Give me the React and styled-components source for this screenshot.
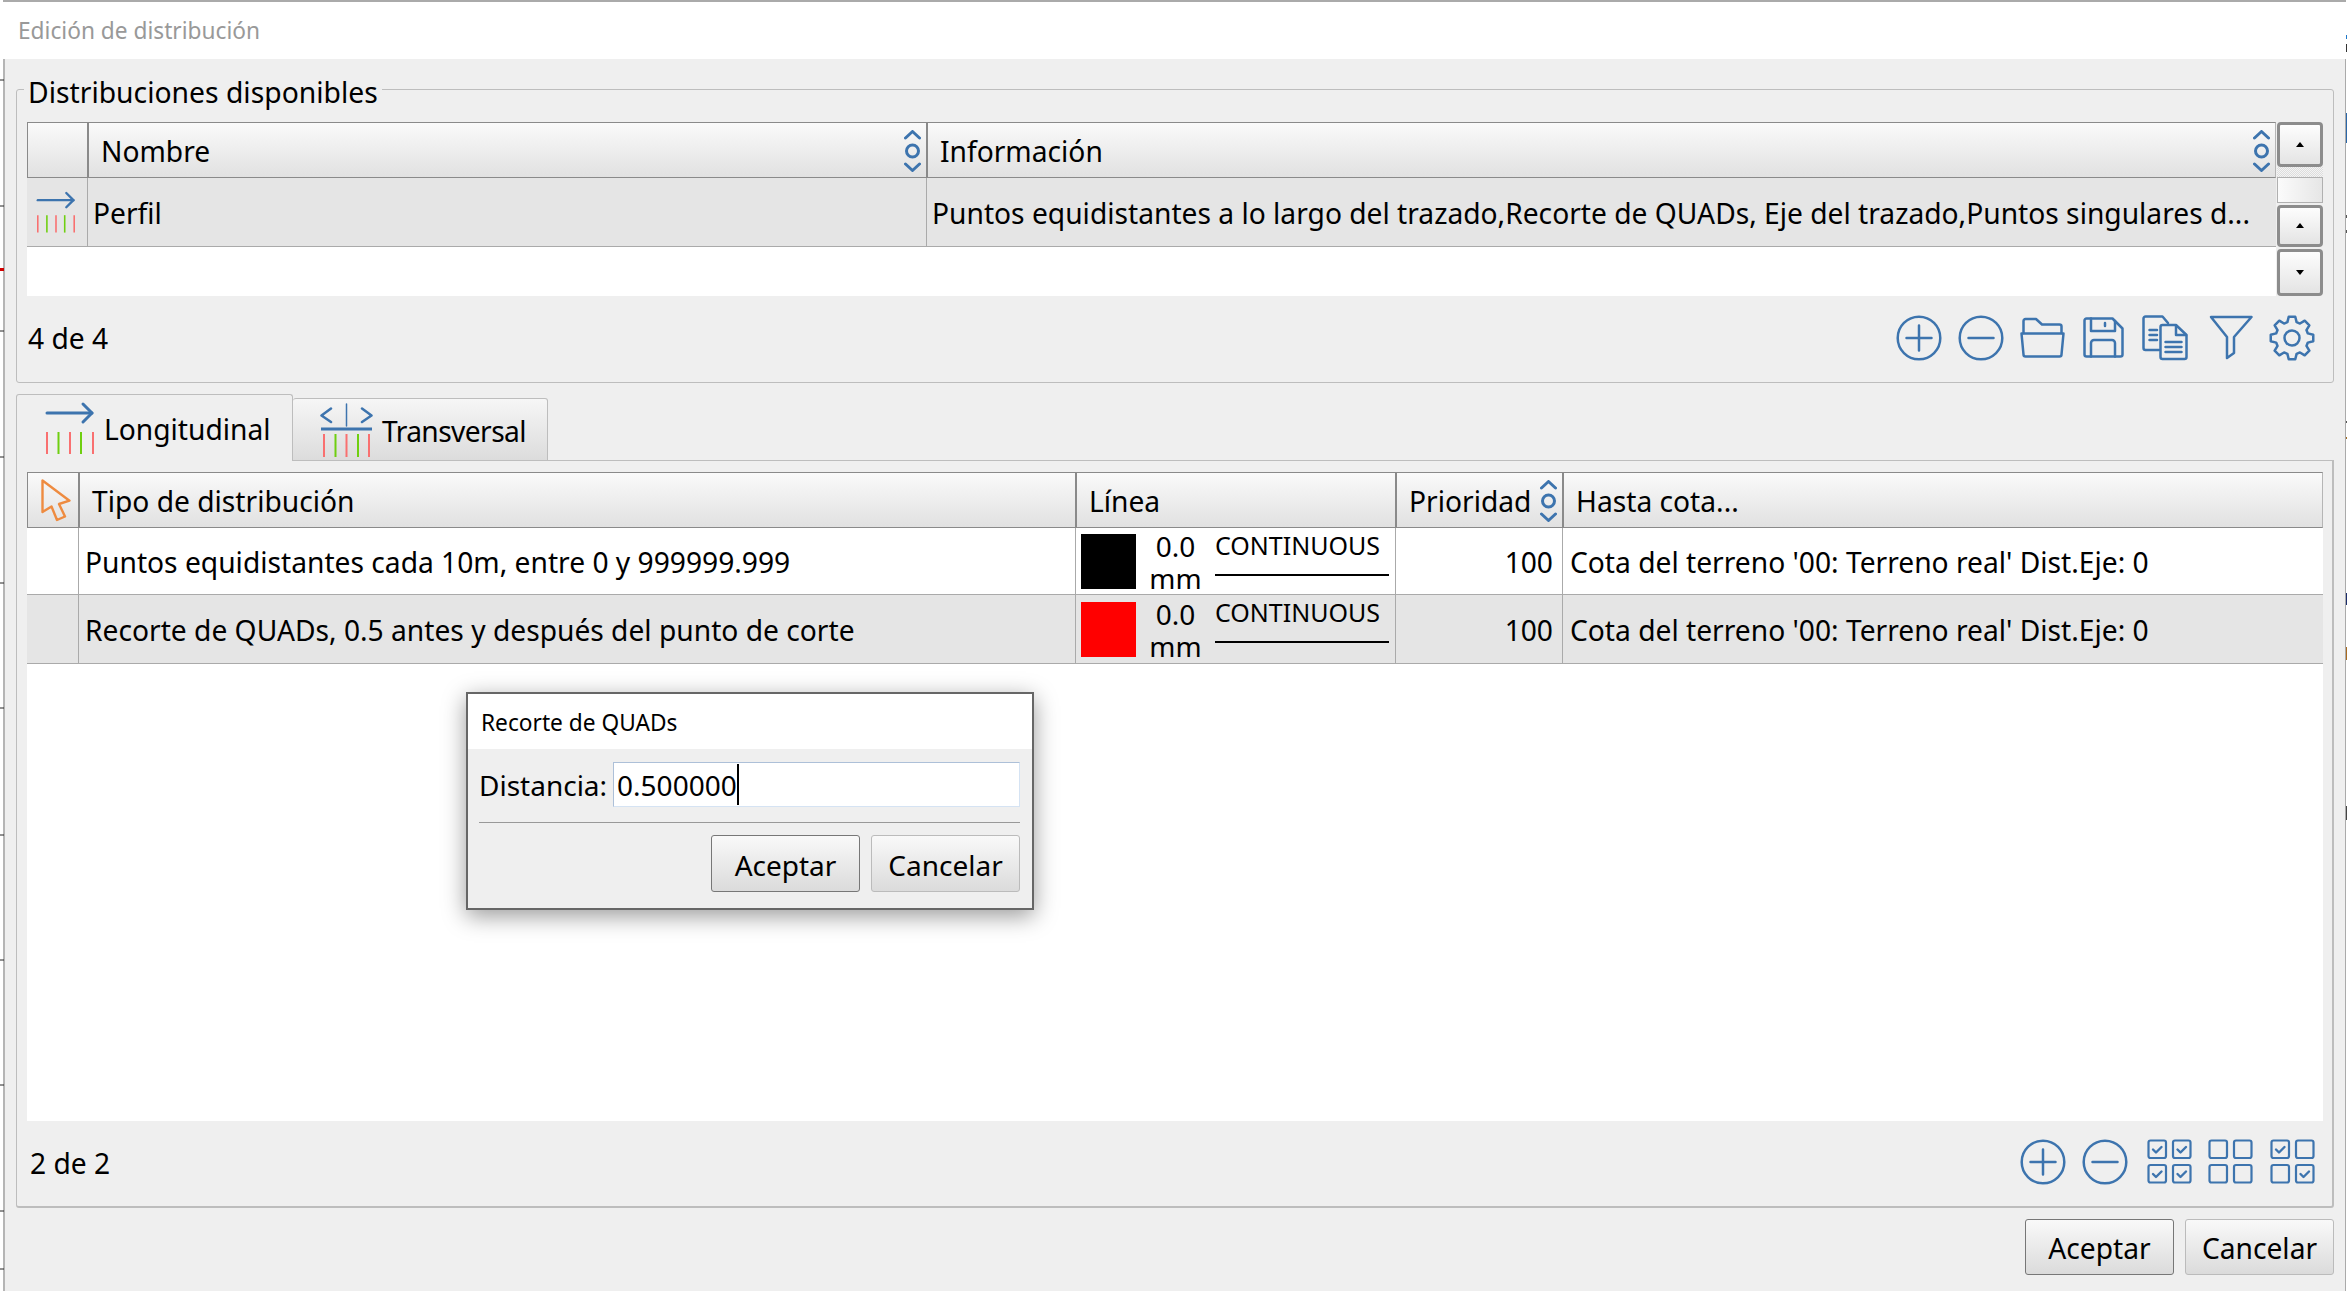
import React from "react";
import styled, { createGlobalStyle } from "styled-components";

const BLUE = "#3d74ae";
const FONT = '"Noto Sans", "Open Sans", sans-serif';

const GlobalStyle = createGlobalStyle`
  html, body {
    margin: 0;
    background: #fff;
    overflow: hidden;
  }
  * { box-sizing: border-box; }
`;

const Page = styled.div`
  position: relative;
  display: flex;
  width: 2347px;
  height: 1291px;
  padding-left: 3px;
  font-family: ${FONT};
  font-size: 28.2px;
  color: #000;
`;
const BehindMarks = styled.svg`
  position: absolute;
  left: 0;
  top: 0;
  pointer-events: none;
`;
const Window = styled.div`
  display: flex;
  flex-direction: column;
  width: 2343px;
  height: 1291px;
  border-top: 2px solid #aaa;
`;
const TitleBar = styled.div`
  height: 57px;
  flex-shrink: 0;
  display: flex;
  align-items: center;
  padding: 0 0 1px 15px;
  background: #fff;
  color: #999;
  font-size: 22.7px;
`;
const Body = styled.div`
  flex: 1;
  display: flex;
  flex-direction: column;
  padding: 0 11px;
  background: #efefef;
  border-left: 2px solid #b5b5b5;
  border-right: 1px solid #aaa;
`;

const Group = styled.fieldset`
  margin: 10px 0 0;
  padding: 0 10px 0 10px;
  min-width: 0;
  border: 1px solid #bdbdbd;
  border-radius: 3px;
`;
const Legend = styled.legend`
  margin-left: -3px;
  padding: 6px 4px 0;
  line-height: 34px;
  font-size: 28.3px;
`;
const TableArea = styled.div`
  display: flex;
  gap: 1px;
  margin-top: 13px;
  height: 174px;
`;
const TableBox = styled.div`
  flex: 1;
  min-width: 0;
  background: #fff;
  height: ${(p) => p.$height || "auto"};
`;
const HeaderRow = styled.div`
  display: grid;
  grid-template-columns: ${(p) => p.$cols};
  height: 56px;
`;
const HeadCell = styled.div`
  display: flex;
  align-items: center;
  justify-content: ${(p) => (p.$center ? "center" : "space-between")};
  padding: 2px 5px 0 ${(p) => p.$pad || 0}px;
  background: linear-gradient(#fafafa, #e1e1e1);
  border: solid #8a8a8a;
  border-width: 1px 0 1px 2px;
  &:first-child { border-left-width: 1px; padding: 0 0 0 ${(p) => p.$pad || 0}px; }
  &:last-child { border-right: 1px solid #b5b5b5; }
`;
const Row = styled.div`
  display: grid;
  grid-template-columns: ${(p) => p.$cols};
  height: ${(p) => p.$h}px;
  background: ${(p) => (p.$alt ? "#e5e5e5" : "#fff")};
  border-bottom: 1px solid #aaa;
`;
const Cell = styled.div`
  display: flex;
  align-items: center;
  justify-content: ${(p) => (p.$right ? "flex-end" : "flex-start")};
  padding: ${(p) => (p.$right ? "1px 9px 0 0" : `1px 0 0 ${p.$pad || 0}px`)};
  border-left: 1px solid #aaa;
  white-space: nowrap;
  &:first-child { border-left: 0; justify-content: center; padding: 0 2px 0 0; }
`;

const ScrollBar = styled.div`
  width: 46px;
  display: flex;
  flex-direction: column;
`;
const ScrollButton = styled.div`
  height: ${(p) => p.$h}px;
  margin-top: ${(p) => p.$mt || 0}px;
  display: flex;
  align-items: center;
  justify-content: center;
  background: linear-gradient(#fdfdfd, #e4e4e4);
  border: 3px solid #8c8c8c;
  border-radius: 4px;
`;
const ScrollTrack = styled.div`
  height: 10px;
  background: repeating-conic-gradient(#ddd 0 25%, #f4f4f4 0 50%) 0 0 / 2px 2px;
`;
const ScrollThumb = styled.div`
  height: 26px;
  background: linear-gradient(90deg, #fbfbfb, #e6e6e6);
  border: 1px solid #b0b0b0;
`;
const Triangle = styled.div`
  width: 0;
  height: 0;
  border-left: 4px solid transparent;
  border-right: 4px solid transparent;
  ${(p) => (p.$down ? "border-top: 5px solid #000;" : "border-bottom: 5px solid #000;")}
`;

const FooterBar = styled.div`
  height: ${(p) => p.$h}px;
  display: flex;
  align-items: center;
  justify-content: space-between;
  padding-bottom: ${(p) => p.$pb}px;
`;
const Count = styled.span`
  padding: ${(p) => p.$top || 0}px 0 0 ${(p) => p.$pad}px;
`;
const Tools = styled.div`
  display: flex;
  align-items: center;
`;
const ToolSlot = styled.div`
  width: 61.5px;
  height: 46px;
  margin-left: ${(p) => p.$ml || 0}px;
  display: flex;
  align-items: center;
  justify-content: center;
`;

const TabStrip = styled.div`
  display: flex;
  align-items: flex-end;
  margin-top: 12px;
  height: 66px;
  margin-bottom: -1px;
`;
const Tab = styled.div`
  position: relative;
  display: flex;
  align-items: center;
  height: ${(p) => (p.$active ? 67 : 63)}px;
  width: ${(p) => p.$w}px;
  gap: ${(p) => (p.$active ? 10 : 9)}px;
  padding-left: ${(p) => p.$pad}px;
  background: ${(p) => (p.$active ? "#efefef" : "linear-gradient(#f6f6f6, #dcdcdc)")};
  border: 1px solid #bdbdbd;
  border-bottom: ${(p) => (p.$active ? "0" : "1px solid #bdbdbd")};
  border-left-width: ${(p) => (p.$active ? 1 : 0)}px;
  border-radius: 3px 3px 0 0;
  z-index: ${(p) => (p.$active ? 1 : 0)};
`;
const TabLabel = styled.span`
  padding-top: 2px;
  letter-spacing: ${(p) => p.$spacing || 0}px;
`;
const TabPane = styled.div`
  height: 748px;
  padding: 11px 9px 0 10px;
  border: 1px solid #bdbdbd;
  border-bottom-width: 2px;
  border-right-width: 2px;
  border-radius: 0 0 3px 3px;
`;

const Swatch = styled.div`
  width: 55px;
  height: 55px;
  flex-shrink: 0;
  margin-left: 5px;
  background: ${(p) => p.$color};
`;
const Thickness = styled.div`
  width: 79px;
  flex-shrink: 0;
  padding-top: 1px;
  font-size: 28px;
  text-align: center;
  line-height: 32px;
  white-space: normal;
`;
const LineType = styled.div`
  width: 174px;
  align-self: flex-start;
  font-size: 25px;
  line-height: 32px;
`;
const LineRule = styled.div`
  margin-top: 13px;
  height: 1.5px;
  background: #000;
`;

const BottomActions = styled.div`
  display: flex;
  justify-content: flex-end;
  gap: 11px;
  margin-top: ${(p) => p.$mt || 0}px;
`;
const PushButton = styled.div`
  width: 149px;
  height: ${(p) => p.$h || 56}px;
  display: flex;
  align-items: center;
  justify-content: center;
  padding-top: 2px;
  background: linear-gradient(#f9f9f9, #dbdbdb);
  border: 1px solid ${(p) => (p.$primary ? "#777" : "#bbb")};
  border-radius: 3px;
`;

const Dialog = styled.div`
  position: absolute;
  left: 466px;
  top: 692px;
  width: 568px;
  height: 218px;
  display: flex;
  flex-direction: column;
  background: #efefef;
  border: 2px solid #666;
  font-size: 28px;
  box-shadow: 0 6px 22px rgba(0, 0, 0, 0.4);
`;
const DialogTitle = styled.div`
  height: 55px;
  display: flex;
  align-items: center;
  padding: 2px 0 0 13px;
  background: #fff;
  font-size: 22.7px;
`;
const DialogBody = styled.div`
  flex: 1;
  padding: 13px 12px 0 11px;
`;
const FieldRow = styled.div`
  display: flex;
  align-items: center;
  gap: 6px;
  height: 45px;
`;
const FieldBox = styled.div`
  flex: 1;
  height: 45px;
  display: flex;
  align-items: center;
  padding-left: 3px;
  background: #fff;
  border: 1px solid #d5e3f3;
  border-top-color: #adc0d8;
  border-left-color: #adc0d8;
`;
const Caret = styled.div`
  width: 2px;
  height: 41px;
  background: #000;
`;
const Divider = styled.div`
  height: 1px;
  margin: 15px 0 12px;
  background: #999;
`;

const Stroke = styled.svg`
  display: block;
  flex-shrink: 0;
  fill: none;
  stroke: ${(p) => p.$color || BLUE};
  stroke-width: ${(p) => p.$sw || 2.5};
  stroke-linecap: round;
  stroke-linejoin: round;
`;

const Sort = () => (
  <Stroke width="17" height="42" viewBox="0 0 17 42" $sw="3">
    <path d="M1.5 8 8.5 1.5 15.5 8" />
    <circle cx="8.5" cy="21" r="6" />
    <path d="M1.5 34 8.5 40.5 15.5 34" />
  </Stroke>
);

const Bars = ({ xs, y1, y2, width = 2 }) =>
  xs.map((x, i) => (
    <line key={x} x1={x} x2={x} y1={y1} y2={y2} stroke={i % 2 ? "#6fcf10" : "#f97070"} strokeWidth={width} strokeLinecap="butt" />
  ));

const LongitudinalIcon = ({ w, h }) => (
  <Stroke width={w} height={h} viewBox="0 0 48 52" $sw="3" style={{ overflow: "visible" }}>
    <path d="M1 11H46" />
    <path d="M37 2 46 11 37 20" />
    <Bars xs={[1, 12.5, 24, 35, 47]} y1={30} y2={52} />
  </Stroke>
);

const TransversalIcon = () => (
  <Stroke width="53" height="54" viewBox="0 0 53 54" $sw="2.5">
    <path d="M11 5.5 1.5 12.5 11 19" />
    <path d="M42 5.5 51.5 12.5 42 19" />
    <path d="M26.5 1V23" strokeWidth="1.5" />
    <path d="M1 26H52" strokeWidth="3" strokeLinecap="butt" />
    <Bars xs={[4, 15.5, 26.5, 38, 49]} y1={31} y2={54} />
  </Stroke>
);

const PointerIcon = () => (
  <Stroke width="30" height="43" viewBox="0 0 30 43" $color="#ee8b40" $sw="2.4">
    <path d="M1.5 1.5V33L10.5 27.5 16 41 24 37.5 18 25 28.5 21.7Z" />
  </Stroke>
);

const PlusIcon = () => (
  <Stroke width="46" height="46" viewBox="0 0 46 46">
    <circle cx="23" cy="23" r="21.3" />
    <path d="M10.5 23H35.5M23 10.5V35.5" />
  </Stroke>
);
const MinusIcon = () => (
  <Stroke width="46" height="46" viewBox="0 0 46 46">
    <circle cx="23" cy="23" r="21.3" />
    <path d="M10.5 23H35.5" />
  </Stroke>
);
const FolderIcon = () => (
  <Stroke width="45" height="41" viewBox="0 0 45 41">
    <path d="M3.5 16V4A2 2 0 0 1 5.5 2H16L22 7.5H39.5A2 2 0 0 1 41.5 9.5V16" />
    <path d="M1.5 16.5H43.5L41.5 37.5A2 2 0 0 1 39.5 39.5H5.5A2 2 0 0 1 3.5 37.5Z" />
  </Stroke>
);
const SaveIcon = () => (
  <Stroke width="41" height="41" viewBox="0 0 41 41">
    <path d="M3.5 1.5H29.5L39.5 11.5V37.5A2 2 0 0 1 37.5 39.5H3.5A2 2 0 0 1 1.5 37.5V3.5A2 2 0 0 1 3.5 1.5Z" />
    <path d="M8 1.5V14H32V4" />
    <path d="M22 6V9" />
    <path d="M8 39.5V26A3 3 0 0 1 11 23H29A3 3 0 0 1 32 26V39.5" />
  </Stroke>
);
const CopyIcon = () => (
  <Stroke width="46" height="46" viewBox="0 0 46 46">
    <path d="M17 35H3.5A2 2 0 0 1 1.5 33V3.5A2 2 0 0 1 3.5 1.5H20.5L26 8" />
    <path d="M20.5 10H34L44.5 20V42A2 2 0 0 1 42.5 44H20.5A2 2 0 0 1 18.5 42V12A2 2 0 0 1 20.5 10Z" />
    <path d="M34 11V20H44" />
    <path d="M23.5 27H39.5M23.5 32H39.5M23.5 37H39.5M7.5 15H15M7.5 20H15M7.5 25H15" />
  </Stroke>
);
const FilterIcon = () => (
  <Stroke width="44" height="45" viewBox="0 0 44 45">
    <path d="M2 2H42.5L25 22V38L18 43V22Z" />
  </Stroke>
);

// contorno de la rueda dentada, 8 dientes
const gearPath = (() => {
  const pts = [];
  const teeth = 8;
  for (let i = 0; i < teeth; i++) {
    const a = (i / teeth) * Math.PI * 2 - Math.PI / 2;
    const step = (Math.PI * 2) / teeth;
    [
      [16.5, -0.5],
      [21.5, -0.27],
      [21.5, 0.27],
      [16.5, 0.5],
    ].forEach(([r, k]) => {
      const t = a + k * step * 0.72;
      pts.push(`${(23 + r * Math.cos(t)).toFixed(2)} ${(23 + r * Math.sin(t)).toFixed(2)}`);
    });
  }
  return `M${pts.join("L")}Z`;
})();

const GearIcon = () => (
  <Stroke width="46" height="46" viewBox="0 0 46 46">
    <path d={gearPath} />
    <circle cx="23" cy="23" r="7.5" />
  </Stroke>
);

const CheckBox = ({ x, y, on }) => (
  <>
    <rect x={x} y={y} width="17.5" height="17.5" rx="2" />
    {on && <path d={`M${x + 4.5} ${y + 9}l3 3 5.5-5.5`} strokeWidth="2.4" />}
  </>
);
const CheckGrid = ({ on }) => (
  <Stroke width="45" height="45" viewBox="0 0 45 45" $sw="2.2">
    <CheckBox x={1.5} y={1.5} on={on[0]} />
    <CheckBox x={26} y={1.5} on={on[1]} />
    <CheckBox x={1.5} y={26} on={on[2]} />
    <CheckBox x={26} y={26} on={on[3]} />
  </Stroke>
);

const TOP_COLS = "60px 839px 1fr";
const LOW_COLS = "51px 997px 320px 167px 1fr";

const TICKS = [80, 206, 331, 457, 583, 708, 835, 960, 1085, 1211, 1269];
const RIGHT_MARKS = [
  [35, 4, "#1f78c8"],
  [44, 8, "#333"],
  [113, 30, "#2a66a8"],
  [215, 3, "#555"],
  [230, 3, "#555"],
  [421, 2, "#555"],
  [437, 2, "#a06a20"],
  [593, 12, "#1b2c6b"],
  [647, 13, "#a86a20"],
  [806, 14, "#444"],
];

const DesktopMarks = () => (
  <BehindMarks width="2347" height="1291" viewBox="0 0 2347 1291">
    {TICKS.map((y) => (
      <line key={y} x1="0" x2="4" y1={y} y2={y} stroke="#222" strokeWidth="1" />
    ))}
    <rect x="0" y="268" width="4" height="3" fill="#d00000" />
    {RIGHT_MARKS.map(([y, h, c]) => (
      <rect key={y} x="2346" y={y} width="1" height={h} fill={c} />
    ))}
  </BehindMarks>
);

const rows = [
  { name: "Puntos equidistantes cada 10m, entre 0 y 999999.999", color: "#000", h: 67, alt: false },
  { name: "Recorte de QUADs, 0.5 antes y después del punto de corte", color: "#f00", h: 69, alt: true },
];

export default function App() {
  return (
    <Page>
      <GlobalStyle />
      <Window>
        <TitleBar>Edición de distribución</TitleBar>
        <Body>
          <Group>
            <Legend>Distribuciones disponibles</Legend>
            <TableArea>
              <TableBox>
                <HeaderRow $cols={TOP_COLS}>
                  <HeadCell />
                  <HeadCell $pad={12}>
                    Nombre
                    <Sort />
                  </HeadCell>
                  <HeadCell $pad={12}>
                    Información
                    <Sort />
                  </HeadCell>
                </HeaderRow>
                <Row $cols={TOP_COLS} $h={69} $alt>
                  <Cell>
                    <LongitudinalIcon w={38} h={42} />
                  </Cell>
                  <Cell $pad={5}>Perfil</Cell>
                  <Cell $pad={5}>
                    Puntos equidistantes a lo largo del trazado,Recorte de QUADs, Eje del trazado,Puntos singulares d...
                  </Cell>
                </Row>
              </TableBox>
              <ScrollBar>
                <ScrollButton $h={45}>
                  <Triangle />
                </ScrollButton>
                <ScrollTrack />
                <ScrollThumb />
                <ScrollButton $h={43} $mt={2}>
                  <Triangle />
                </ScrollButton>
                <ScrollButton $h={47} $mt={2}>
                  <Triangle $down />
                </ScrollButton>
              </ScrollBar>
            </TableArea>
            <FooterBar $h={86} $pb={3}>
              <Count $pad={1}>4 de 4</Count>
              <Tools>
                <ToolSlot><PlusIcon /></ToolSlot>
                <ToolSlot><MinusIcon /></ToolSlot>
                <ToolSlot><FolderIcon /></ToolSlot>
                <ToolSlot><SaveIcon /></ToolSlot>
                <ToolSlot><CopyIcon /></ToolSlot>
                <ToolSlot $ml={4}><FilterIcon /></ToolSlot>
                <ToolSlot><GearIcon /></ToolSlot>
              </Tools>
            </FooterBar>
          </Group>

          <TabStrip>
            <Tab $active $w={277} $pad={29}>
              <LongitudinalIcon w={48} h={52} />
              <TabLabel>Longitudinal</TabLabel>
            </Tab>
            <Tab $w={255} $pad={27}>
              <TransversalIcon />
              <TabLabel $spacing={-0.6}>Transversal</TabLabel>
            </Tab>
          </TabStrip>
          <TabPane>
            <TableBox $height="649px">
              <HeaderRow $cols={LOW_COLS}>
                <HeadCell $center $pad={5}>
                  <PointerIcon />
                </HeadCell>
                <HeadCell $pad={12}>Tipo de distribución</HeadCell>
                <HeadCell $pad={12}>Línea</HeadCell>
                <HeadCell $pad={12}>
                  Prioridad
                  <Sort />
                </HeadCell>
                <HeadCell $pad={12}>Hasta cota...</HeadCell>
              </HeaderRow>
              {rows.map((r) => (
                <Row key={r.name} $cols={LOW_COLS} $h={r.h} $alt={r.alt}>
                  <Cell />
                  <Cell $pad={6}>{r.name}</Cell>
                  <Cell>
                    <Swatch $color={r.color} />
                    <Thickness>0.0 mm</Thickness>
                    <LineType>
                      CONTINUOUS
                      <LineRule />
                    </LineType>
                  </Cell>
                  <Cell $right>100</Cell>
                  <Cell $pad={7}>Cota del terreno '00: Terreno real' Dist.Eje: 0</Cell>
                </Row>
              ))}
            </TableBox>
            <FooterBar $h={85} $pb={4}>
              <Count $pad={3} $top={2}>2 de 2</Count>
              <Tools>
                <ToolSlot><PlusIcon /></ToolSlot>
                <ToolSlot><MinusIcon /></ToolSlot>
                <ToolSlot $ml={3}><CheckGrid on={[1, 1, 1, 1]} /></ToolSlot>
                <ToolSlot><CheckGrid on={[0, 0, 0, 0]} /></ToolSlot>
                <ToolSlot><CheckGrid on={[1, 0, 0, 1]} /></ToolSlot>
              </Tools>
            </FooterBar>
          </TabPane>
          <BottomActions $mt={11}>
            <PushButton $primary>Aceptar</PushButton>
            <PushButton>Cancelar</PushButton>
          </BottomActions>
        </Body>
      </Window>

      <Dialog>
        <DialogTitle>Recorte de QUADs</DialogTitle>
        <DialogBody>
          <FieldRow>
            Distancia:
            <FieldBox>
              0.500000
              <Caret />
            </FieldBox>
          </FieldRow>
          <Divider />
          <BottomActions>
            <PushButton $primary $h={57}>Aceptar</PushButton>
            <PushButton $h={57}>Cancelar</PushButton>
          </BottomActions>
        </DialogBody>
      </Dialog>
      <DesktopMarks />
    </Page>
  );
}
